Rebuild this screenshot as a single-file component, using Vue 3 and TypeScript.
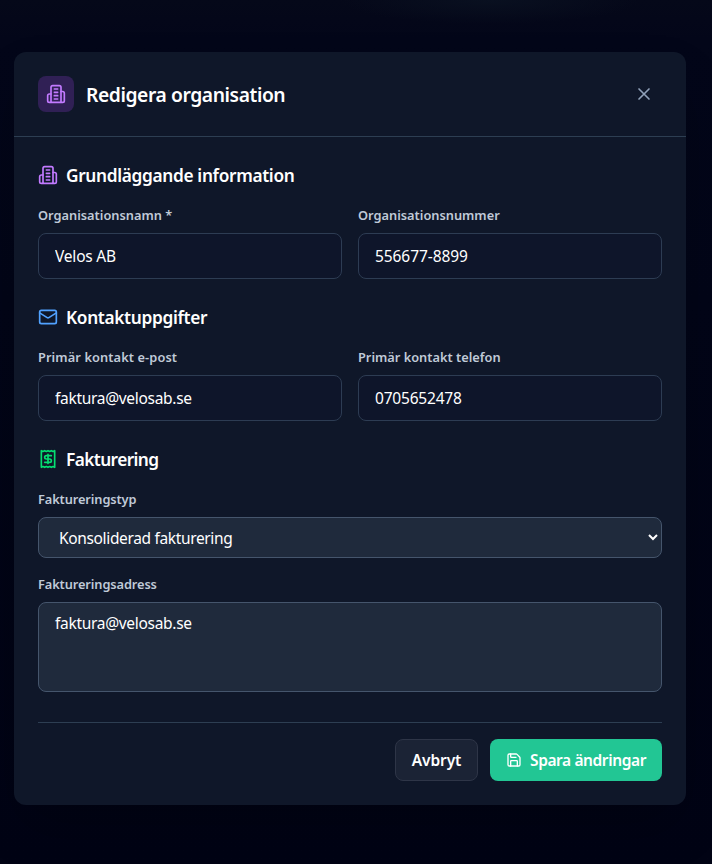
<script setup lang="ts">
import { ref } from 'vue'

const name = ref('Velos AB')
const orgNumber = ref('556677-8899')
const email = ref('faktura@velosab.se')
const phone = ref('0705652478')
const billingType = ref('consolidated')
const billingAddress = ref('faktura@velosab.se')
</script>

<template>
  <div class="backdrop">
    <div class="modal" role="dialog" aria-labelledby="dialog-title">
      <header class="modal-header">
        <div class="heading">
          <span class="badge">
            <svg class="icon" viewBox="0 0 24 24">
              <path d="M6 22V4a2 2 0 0 1 2-2h8a2 2 0 0 1 2 2v18Z" />
              <path d="M6 12H4a2 2 0 0 0-2 2v6a2 2 0 0 0 2 2h2M18 9h2a2 2 0 0 1 2 2v9a2 2 0 0 1-2 2h-2" />
              <path d="M10 6h4M10 10h4M10 14h4M10 18h4" />
            </svg>
          </span>
          <h2 id="dialog-title">Redigera organisation</h2>
        </div>
        <button class="close" type="button">
          <svg class="icon" viewBox="0 0 24 24"><path d="M18 6 6 18M6 6l12 12" /></svg>
        </button>
      </header>

      <form class="modal-body" @submit.prevent>
        <section>
          <h3>
            <svg class="icon purple" viewBox="0 0 24 24">
              <path d="M6 22V4a2 2 0 0 1 2-2h8a2 2 0 0 1 2 2v18Z" />
              <path d="M6 12H4a2 2 0 0 0-2 2v6a2 2 0 0 0 2 2h2M18 9h2a2 2 0 0 1 2 2v9a2 2 0 0 1-2 2h-2" />
              <path d="M10 6h4M10 10h4M10 14h4M10 18h4" />
            </svg>
            <span>Grundläggande information</span>
          </h3>
          <div class="grid">
            <label class="field">
              <span class="label">Organisationsnamn *</span>
              <input v-model="name" class="control name" type="text" />
            </label>
            <label class="field">
              <span class="label">Organisationsnummer</span>
              <input v-model="orgNumber" class="control digits" type="text" />
            </label>
          </div>
        </section>

        <section>
          <h3>
            <svg class="icon blue" viewBox="0 0 24 24">
              <rect x="2" y="4" width="20" height="16" rx="2" />
              <path d="m22 7-8.97 5.7a1.94 1.94 0 0 1-2.06 0L2 7" />
            </svg>
            <span>Kontaktuppgifter</span>
          </h3>
          <div class="grid">
            <label class="field">
              <span class="label email-label">Primär kontakt e-post</span>
              <input v-model="email" class="control" type="text" />
            </label>
            <label class="field">
              <span class="label">Primär kontakt telefon</span>
              <input v-model="phone" class="control phone" type="text" />
            </label>
          </div>
        </section>

        <section>
          <h3 class="billing-title">
            <svg class="icon green" viewBox="0 0 24 24">
              <path d="M4 2v20l2-1 2 1 2-1 2 1 2-1 2 1 2-1 2 1V2l-2 1-2-1-2 1-2-1-2 1-2-1-2 1Z" />
              <path d="M16 8h-6a2 2 0 1 0 0 4h4a2 2 0 1 1 0 4H8M12 17.5v-11" />
            </svg>
            <span>Fakturering</span>
          </h3>
          <div class="stack">
            <label class="field">
              <span class="label billing-label">Faktureringstyp</span>
              <select v-model="billingType" class="control filled">
                <option value="consolidated">Konsoliderad fakturering</option>
              </select>
            </label>
            <label class="field">
              <span class="label billing-label">Faktureringsadress</span>
              <textarea v-model="billingAddress" class="control filled" spellcheck="false"></textarea>
            </label>
          </div>
        </section>

        <footer>
          <button class="btn cancel" type="button">Avbryt</button>
          <button class="btn save" type="submit">
            <svg class="icon small" viewBox="0 0 24 24">
              <path d="M15.2 3a2 2 0 0 1 1.4.6l3.8 3.8a2 2 0 0 1 .6 1.4V19a2 2 0 0 1-2 2H5a2 2 0 0 1-2-2V5a2 2 0 0 1 2-2z" />
              <path d="M17 21v-7a1 1 0 0 0-1-1H8a1 1 0 0 0-1 1v7M7 3v4a1 1 0 0 0 1 1h7" />
            </svg>
            <span>Spara ändringar</span>
          </button>
        </footer>
      </form>
    </div>
  </div>
</template>

<style>
body {
  background: #010314;
}
</style>

<style scoped>
* {
  box-sizing: border-box;
}
.backdrop {
  min-height: 864px;
  padding: 52px 26px 0 14px;
  overflow: hidden;
  font-family: "Noto Sans", "Open Sans", sans-serif;
  color: #fff;
  background:
    radial-gradient(ellipse 150px 24px at 490px 0, #091020, transparent),
    linear-gradient(#050819, #030619 40px, #020517 300px, #010314);
}
.modal {
  height: 753px;
  border-radius: 12px;
  background: #0f1729;
  box-shadow: 0 25px 50px -12px rgba(0, 0, 0, 0.25);
}
.modal-header {
  height: 85px;
  display: flex;
  align-items: center;
  justify-content: space-between;
  padding: 0 24px;
  border-bottom: 1px solid #2d3e52;
}
.heading {
  display: flex;
  align-items: center;
  gap: 12px;
}
.badge {
  display: grid;
  place-items: center;
  width: 36px;
  height: 36px;
  border-radius: 8px;
  color: #c27aff;
  background: #302055;
}
.icon {
  display: block;
  flex: none;
  width: 20px;
  height: 20px;
  fill: none;
  stroke: currentColor;
  stroke-width: 2;
  stroke-linecap: round;
  stroke-linejoin: round;
}
.small {
  width: 16px;
  height: 16px;
}
.purple {
  color: #c27aff;
}
.blue {
  color: #51a2ff;
}
.green {
  color: #05df72;
}
h2,
h3 {
  margin: 0;
  font-weight: 600;
}
h2 {
  padding-top: 2px;
  font-size: 19.3px;
  line-height: 28px;
  letter-spacing: -0.43px;
}
.close {
  padding: 8px;
  border: 0;
  color: #90a1b9;
  background: transparent;
}
.modal-body {
  display: flex;
  flex-direction: column;
  gap: 24px;
  padding: 24px;
}
h3 {
  display: flex;
  align-items: center;
  gap: 8px;
  height: 28px;
  margin-bottom: 16px;
  font-size: 17.3px;
  line-height: 26px;
  letter-spacing: -0.34px;
}
h3 span {
  padding-top: 2px;
}
.billing-title {
  letter-spacing: -0.6px;
}
.grid {
  display: grid;
  grid-template-columns: 1fr 1fr;
  gap: 16px;
}
.stack {
  display: grid;
  gap: 16px;
}
.field {
  display: flex;
  flex-direction: column;
  gap: 8px;
}
.label {
  color: #c0cad8;
  font-size: 12.8px;
  font-weight: 600;
  line-height: 20px;
  letter-spacing: 0;
}
.email-label {
  letter-spacing: 0.1px;
}
.billing-label {
  letter-spacing: -0.1px;
}
.control {
  display: block;
  width: 100%;
  height: 46px;
  margin: 0;
  padding: 0 16px;
  border: 1px solid #2d3c53;
  border-radius: 8px;
  outline: none;
  color: #fff;
  background: #0e152a;
  font: 400 15.5px/24px "Noto Sans", "Open Sans", sans-serif;
  letter-spacing: -0.3px;
}
.name {
  letter-spacing: -0.2px;
}
.digits {
  letter-spacing: -0.08px;
}
.phone {
  letter-spacing: -0.2px;
}
.filled {
  border-color: #45556c;
  background: #1f2a3c;
}
select.filled {
  height: 41px;
  letter-spacing: -0.35px;
}
textarea.filled {
  height: 90px;
  padding: 8px 16px;
  resize: none;
}
footer {
  display: flex;
  justify-content: flex-end;
  gap: 12px;
  margin-top: 6px;
  padding-top: 16px;
  border-top: 1px solid #2d3e52;
}
.btn {
  display: flex;
  align-items: center;
  justify-content: center;
  gap: 8px;
  height: 42px;
  padding: 0;
  border: 0;
  border-radius: 8px;
  color: #fff;
  font: 600 15.5px/24px "Noto Sans", "Open Sans", sans-serif;
}
.cancel {
  width: 83px;
  border: 1px solid #2e3547;
  letter-spacing: -0.1px;
  background: #1b2335;
}
.save {
  width: 172px;
  letter-spacing: -0.4px;
  background: #22c694;
}
</style>
